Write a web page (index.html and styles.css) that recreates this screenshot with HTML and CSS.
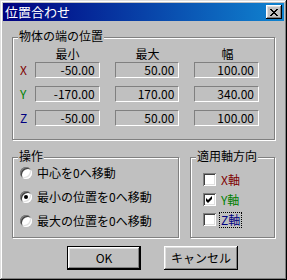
FILE: index.html
```html
<!DOCTYPE html>
<html lang="ja">
<head>
<meta charset="utf-8">
<link rel="stylesheet" href="styles.css">
</head>
<body>
<div class="window">
  <div class="titlebar">
    <span class="title">位置合わせ</span>
    <button class="close" aria-label="閉じる">
      <svg width="8" height="7" viewBox="0 0 8 7"><path fill="#000" d="M0 0h2v1H0z M6 0h2v1H6z M1 1h2v1H1z M5 1h2v1H5z M2 2h4v1H2z M3 3h2v1H3z M2 4h4v1H2z M1 5h2v1H1z M5 5h2v1H5z M0 6h2v1H0z M6 6h2v1H6z"/></svg>
    </button>
  </div>
  <div class="content">
    <div class="group bounds">
      <span class="legend">物体の端の位置</span>
      <div class="heads">
        <span class="hd">最小</span><span class="hd">最大</span><span class="hd">幅</span>
      </div>
      <div class="rows">
        <div class="row"><span class="axis ax-x">X</span><span class="field">-50.00</span><span class="field">50.00</span><span class="field">100.00</span></div>
        <div class="row"><span class="axis ax-y">Y</span><span class="field">-170.00</span><span class="field">170.00</span><span class="field">340.00</span></div>
        <div class="row"><span class="axis ax-z">Z</span><span class="field">-50.00</span><span class="field">50.00</span><span class="field">100.00</span></div>
      </div>
    </div>
    <div class="lower">
      <div class="group ops">
        <span class="legend">操作</span>
        <div class="opt"><span class="radio"></span><span>中心を0へ移動</span></div>
        <div class="opt"><span class="radio on"></span><span>最小の位置を0へ移動</span></div>
        <div class="opt"><span class="radio"></span><span>最大の位置を0へ移動</span></div>
      </div>
      <div class="group axes">
        <span class="legend">適用軸方向</span>
        <div class="chk-row"><span class="check"></span><span class="lbl ax-x">X軸</span></div>
        <div class="chk-row"><span class="check"><svg width="13" height="13" viewBox="0 0 13 13"><path fill="#000" d="M3 5L5 7L9 3V6L5 10L3 8Z"/></svg></span><span class="lbl ax-y">Y軸</span></div>
        <div class="chk-row"><span class="check"></span><span class="lbl ax-z focus">Z軸</span></div>
      </div>
    </div>
    <div class="buttons">
      <button class="btn default">OK</button>
      <button class="btn">キャンセル</button>
    </div>
  </div>
</div>
</body>
</html>
```
FILE: styles.css
```css
html, body {
  margin: 0;
  padding: 0;
  background: #c0c0c0;
}

.window {
  width: 287px;
  height: 280px;
  box-sizing: border-box;
  padding: 3px;
  background: #c0c0c0;
  box-shadow: inset -1px -1px 0 #000, inset 1px 1px 0 #dfdfdf,
              inset -2px -2px 0 #808080, inset 2px 2px 0 #fff;
  font: 12px/14px "Noto Sans CJK JP", "Liberation Sans", sans-serif;
  color: #000;
}

.titlebar {
  height: 18px;
  display: flex;
  align-items: center;
  justify-content: space-between;
  padding: 0 2px;
  background: linear-gradient(to right, #000080, #1084d0);
  color: #fff;
}

.title {
  font-size: 13px;
}

.close {
  width: 16px;
  height: 14px;
  padding: 0;
  border: 0;
  background: #c0c0c0;
  box-shadow: inset -1px -1px 0 #000, inset 1px 1px 0 #fff,
              inset -2px -2px 0 #808080, inset 2px 2px 0 #dfdfdf;
  display: flex;
  align-items: center;
  justify-content: center;
}

.close svg { display: block; }

.content {
  padding: 16px 0 0 9px;
}

.group {
  position: relative;
  box-sizing: border-box;
  border: 1px solid #808080;
  box-shadow: inset 1px 1px 0 #fff, 1px 1px 0 #fff;
}

.legend {
  position: absolute;
  top: -9px;
  left: 5px;
  padding: 0 1px;
  background: #c0c0c0;
}

.bounds {
  width: 263px;
  height: 103px;
  padding: 9px 0 0 7px;
}

.heads {
  display: flex;
  height: 15px;
  margin-left: 15px;
  gap: 15px;
}

.hd {
  width: 65px;
  text-align: center;
}

.rows {
  display: flex;
  flex-direction: column;
  gap: 8px;
}

.row {
  display: flex;
  height: 16px;
}

.axis {
  width: 15px;
  line-height: 16px;
}

.ax-x { color: #800000; }
.ax-y { color: #008000; }
.ax-z { color: #000080; }

.field {
  box-sizing: border-box;
  width: 65px;
  height: 16px;
  margin-right: 15px;
  border: 1px solid;
  border-color: #808080 #fff #fff #808080;
  text-align: right;
  padding-right: 4px;
  line-height: 14px;
}

.lower {
  display: flex;
  gap: 11px;
  margin-top: 17px;
}

.ops {
  width: 167px;
  height: 81px;
  padding: 8px 0 0 7px;
  display: flex;
  flex-direction: column;
  gap: 10px;
}

.opt {
  display: flex;
  align-items: center;
  gap: 5px;
  height: 14px;
}

.radio {
  flex: none;
  width: 12px;
  height: 12px;
  border-radius: 50%;
  background: #fff;
  box-shadow: inset 1px 1px 0 #808080, inset -1px -1px 0 #fff,
              inset 2px 2px 0 #404040, inset -2px -2px 0 #dfdfdf;
  display: flex;
  align-items: center;
  justify-content: center;
}

.radio.on::after {
  content: "";
  width: 4px;
  height: 4px;
  border-radius: 50%;
  background: #000;
}

.axes {
  width: 85px;
  height: 81px;
  padding: 15px 0 0 12px;
  display: flex;
  flex-direction: column;
  gap: 7px;
}

.chk-row {
  display: flex;
  align-items: center;
  gap: 3px;
  height: 13px;
}

.check {
  flex: none;
  width: 13px;
  height: 13px;
  background: #fff;
  box-shadow: inset 1px 1px 0 #808080, inset -1px -1px 0 #fff,
              inset 2px 2px 0 #404040, inset -2px -2px 0 #dfdfdf;
}

.check svg { display: block; }

.lbl {
  border: 1px solid transparent;
  padding: 0 1px;
  line-height: 14px;
}

.lbl.focus {
  border: 1px dotted #000;
}

.buttons {
  display: flex;
  gap: 23px;
  margin: 8px 0 0 55px;
}

.btn {
  width: 74px;
  height: 24px;
  padding: 0;
  border: 0;
  background: #c0c0c0;
  color: #000;
  font: inherit;
  box-shadow: inset -1px -1px 0 #000, inset 1px 1px 0 #fff,
              inset -2px -2px 0 #808080, inset 2px 2px 0 #dfdfdf;
}

.btn.default {
  box-shadow: inset 0 0 0 1px #000, inset -2px -2px 0 #000, inset 2px 2px 0 #fff,
              inset -3px -3px 0 #808080, inset 3px 3px 0 #dfdfdf;
}
```
